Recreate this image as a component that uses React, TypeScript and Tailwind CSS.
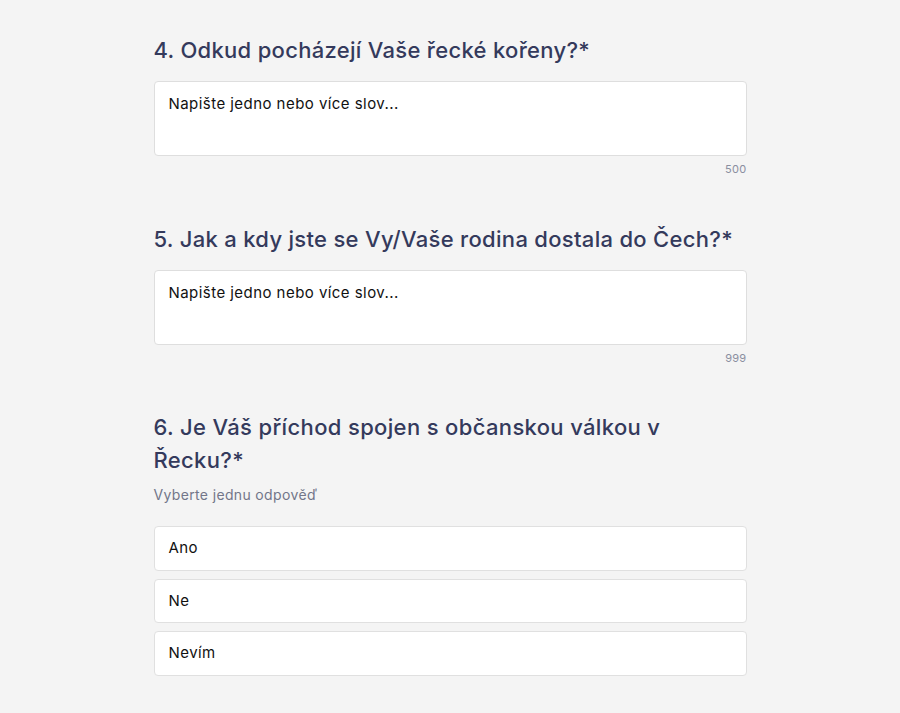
import React from "react";

const font = { fontFamily: 'Inter, "Liberation Sans", Arial, sans-serif' };

function TextQuestion({ title, limit }: { title: string; limit: number }) {
  return (
    <div>
      <h2 className="text-[22px] leading-[33px] font-medium tracking-[0.3px] text-[#343a5c]">{title}</h2>
      <div className="mt-[14px] h-[75px] rounded-[4px] border border-[#dedede] bg-white px-[14px] pt-[11px] text-[15px] leading-[22px] tracking-[0.45px] text-[#111]">
        Napište jedno nebo více slov...
      </div>
      <div className="mt-[6px] text-right text-[11px] leading-[14px] tracking-[0.3px] text-[#8a8ea0]">{limit}</div>
    </div>
  );
}

export default function App() {
  const options = ["Ano", "Ne", "Nevím"];
  return (
    <div className="min-h-[713px] bg-[#f4f4f4]" style={font}>
      <div className="mx-auto w-[593px] pt-[34px]">
        <TextQuestion title="4. Odkud pocházejí Vaše řecké kořeny?*" limit={500} />
        <div className="mt-[47px]">
          <TextQuestion title="5. Jak a kdy jste se Vy/Vaše rodina dostala do Čech?*" limit={999} />
        </div>
        <div className="mt-[46px]">
          <h2 className="text-[22px] leading-[33px] font-medium tracking-[0.35px] text-[#343a5c]">
            6. Je Váš příchod spojen s občanskou válkou v <span className="whitespace-nowrap">Řecku?*</span>
          </h2>
          <p className="mt-[8px] text-[14px] leading-[20px] tracking-[0.35px] text-[#727689]">Vyberte jednu odpověď</p>
          <div className="mt-[21px] flex flex-col gap-[8px]">
            {options.map((o) => (
              <div
                key={o}
                className="flex h-[44.5px] items-center rounded-[4px] border border-[#e0e0e0] bg-white px-[14px] text-[15px] tracking-[0.45px] text-[#111]"
              >
                {o}
              </div>
            ))}
          </div>
        </div>
      </div>
    </div>
  );
}
